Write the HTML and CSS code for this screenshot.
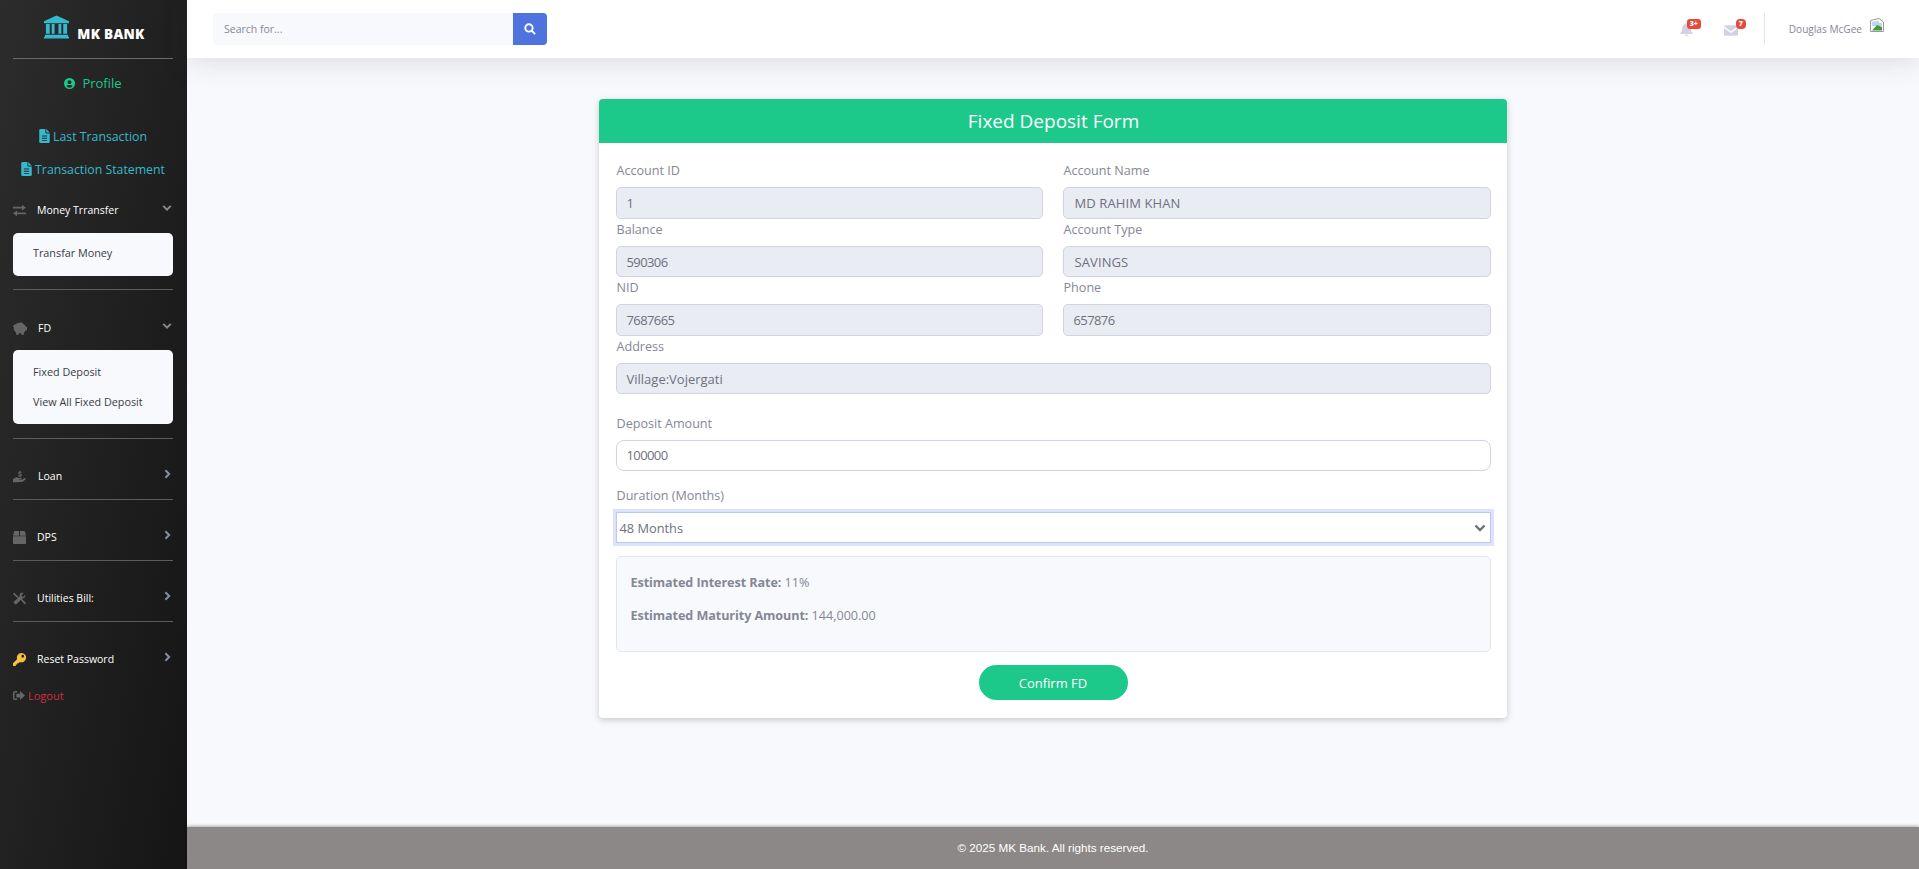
FILE: index.html
```html
<!DOCTYPE html>
<html lang="en">
<head>
<meta charset="utf-8">
<title>Fixed Deposit Form</title>
<link rel="stylesheet" href="styles.css">
</head>
<body>
<div class="app">
  <aside class="sidebar">
    <a class="brand">
      <svg class="brand-icon" viewBox="0 0 28 24"><path d="M14 0 L27 6 V8 H1 V6 Z M3 9 H7 V19 H3 Z M9 9 H12 V19 H9 Z M16 9 H19 V19 H16 Z M21 9 H25 V19 H21 Z M2 20 H26 V22 H27 V24 H1 V22 H2 Z"/></svg>
      <span>MK BANK</span>
    </a>
    <hr class="rule rule-brand">
    <a class="link-profile">
      <svg class="ico-s" viewBox="0 0 16 16"><path fill-rule="evenodd" d="M8 0a8 8 0 1 1 0 16A8 8 0 0 1 8 0zm0 3.200a2.800 2.800 0 1 0 0 5.600 2.800 2.800 0 0 0 0-5.600zM8 14a6 6 0 0 0 4.600-2.200C11.900 10.600 10.500 10 8 10s-3.900.6-4.600 1.800A6 6 0 0 0 8 14z"/></svg>
      <span>Profile</span>
    </a>
    <a class="link-doc link-doc-first">
      <svg class="ico-doc" viewBox="0 0 12 16"><path fill-rule="evenodd" d="M0 1.500A1.500 1.500 0 0 1 1.500 0H7v4a1 1 0 0 0 1 1h4v9.500a1.500 1.500 0 0 1-1.500 1.500h-9A1.500 1.500 0 0 1 0 14.500zM3 7.500v1h6v-1zm0 2.500v1h6v-1zm0 2.500v1h6v-1zM8 0l4 4H8z"/></svg>
      <span>Last Transaction</span>
    </a>
    <a class="link-doc link-doc-second">
      <svg class="ico-doc" viewBox="0 0 12 16"><path fill-rule="evenodd" d="M0 1.500A1.500 1.500 0 0 1 1.500 0H7v4a1 1 0 0 0 1 1h4v9.500a1.500 1.500 0 0 1-1.500 1.500h-9A1.500 1.500 0 0 1 0 14.500zM3 7.500v1h6v-1zm0 2.500v1h6v-1zm0 2.500v1h6v-1zM8 0l4 4H8z"/></svg>
      <span>Transaction Statement</span>
    </a>

    <div class="nav-row nav-transfer">
      <svg class="nav-ico" viewBox="0 0 16 14"><path d="M11 0l5 3.500L11 7V4.500H0v-2h11zM5 7v2.500h11v2H5V14L0 10.500z"/></svg>
      <span class="nav-label">Money Trransfer</span>
      <svg class="chev" viewBox="0 0 12 8"><path d="M1.500 1.500L6 6l4.500-4.500" /></svg>
    </div>
    <div class="sub-card sub-one"><a>Transfar Money</a></div>
    <hr class="rule rule-a">

    <div class="nav-row nav-fd">
      <svg class="nav-ico nav-ico-pig" viewBox="0 0 16 14"><path d="M4 1.500C5 .5 6.500 0 8 .5 9 0 10.500 0 11.500 1.500 13 2 14.200 3.500 14.500 5H16v4h-1.500c-.5 1.500-1.500 2-2 2.500V14h-3v-1.500h-3V14h-3v-2.500C1.500 10 .5 8 1 5.500L0 4.500 1 3c1-.8 2-1.300 3-1.500z"/></svg>
      <span class="nav-label nav-label-fd">FD</span>
      <svg class="chev" viewBox="0 0 12 8"><path d="M1.500 1.500L6 6l4.500-4.500" /></svg>
    </div>
    <div class="sub-card sub-two"><a>Fixed Deposit</a><a>View All Fixed Deposit</a></div>
    <hr class="rule rule-b">

    <div class="nav-row nav-plain">
      <svg class="nav-ico" viewBox="0 0 16 14"><path d="M8 0h1.500v1c1 .2 1.500.7 1.500 1.500H9.500C9.300 2.200 8.800 2.200 8.300 2.300c-.6.300-.3.800.3 1 1.300.3 2.500.7 2.400 2C11 6.300 10.400 7 9.500 7.100V8H8v-.9c-1-.2-1.700-.8-1.700-1.700h1.500c.2.400.8.500 1.200.4.600-.2.500-.7-.1-.9C7.700 4.500 6.500 4.100 6.500 3 6.500 2 7.100 1.300 8 1.100zM0 10l3-1.500c1.500-.7 3-.5 4 .2h3c1 0 1 1.800 0 1.800H7.500v.5H11l3-2c1.200-.6 2.300.7 1.300 1.700L12 13.500 4 14H0z"/></svg>
      <span class="nav-label nav-label-short">Loan</span>
      <svg class="chev-r" viewBox="0 0 8 12"><path d="M1.500 1.500L6 6l-4.500 4.500"/></svg>
    </div>
    <hr class="rule rule-c">

    <div class="nav-row nav-plain">
      <svg class="nav-ico" viewBox="0 0 14 14"><path d="M2 0h4.500v5H0l1-4c.3-.7.5-1 1-1zM7.500 0H12c.5 0 .7.300 1 1l1 4H7.500zM0 5.700h14V13a1 1 0 0 1-1 1H1a1 1 0 0 1-1-1z"/></svg>
      <span class="nav-label">DPS</span>
      <svg class="chev-r" viewBox="0 0 8 12"><path d="M1.500 1.500L6 6l-4.500 4.500"/></svg>
    </div>
    <hr class="rule rule-c">

    <div class="nav-row nav-plain">
      <svg class="nav-ico" viewBox="0 0 16 14"><path d="M1.500 0L7 5 5.500 6.500 0 1.500zM10.500 0c1 0 2 .2 2.500.6L10.500 3l.5 1.500 1.500.5L15 2.500c.5 2-.5 4.500-3.500 4.500L4 14H2.500L1 12.500V11L8 4.500C8 2 9 .2 10.500 0zM9.500 8.500L11 7.500l4.500 4.500c.5 1 0 2-1.500 2z"/></svg>
      <span class="nav-label">Utilities Bill:</span>
      <svg class="chev-r" viewBox="0 0 8 12"><path d="M1.500 1.500L6 6l-4.500 4.500"/></svg>
    </div>
    <hr class="rule rule-c">

    <div class="nav-row nav-plain">
      <svg class="nav-ico nav-ico-key" viewBox="0 0 14 14"><path fill-rule="evenodd" d="M9 0a5 5 0 1 1-1.600 9.700L6 11H4.500v1.500H3V14H0v-3l4.400-4.400A5 5 0 0 1 9 0zm1.500 2a1.500 1.500 0 1 0 0 3 1.500 1.500 0 0 0 0-3z"/></svg>
      <span class="nav-label">Reset Password</span>
      <svg class="chev-r" viewBox="0 0 8 12"><path d="M1.500 1.500L6 6l-4.500 4.500"/></svg>
    </div>

    <a class="logout">
      <svg class="logout-ico" viewBox="0 0 16 14"><path d="M5.500 1H2.500A2.500 2.500 0 0 0 0 3.500v7A2.500 2.500 0 0 0 2.500 13h3v-2h-3a.5.5 0 0 1-.5-.5v-7a.5.5 0 0 1 .5-.5h3zM9.500 1L16 7l-6.500 6V9.500h-5v-5h5z"/></svg>
      <span>Logout</span>
    </a>
  </aside>

  <div class="content">
    <header class="topbar">
      <form class="search">
        <div class="search-input">Search for...</div>
        <div class="search-btn">
          <svg viewBox="0 0 14 14"><circle cx="5.800" cy="5.800" r="4.300"/><path d="M9 9l4 4"/></svg>
        </div>
      </form>
      <div class="top-right">
        <div class="alert">
          <svg class="alert-ico" viewBox="0 0 16 18"><path d="M8 0c.8 0 1.200.6 1.200 1.300C12 2 13.500 4 13.500 7c0 3.500 1 4.500 2.500 6v1H0v-1c1.500-1.500 2.500-2.500 2.500-6 0-3 1.500-5 4.300-5.700C6.800.6 7.200 0 8 0zM6 15h4a2 2 0 0 1-4 0z"/></svg>
          <span class="badge badge-wide">3+</span>
        </div>
        <div class="alert alert-mail">
          <svg class="alert-ico alert-ico-mail" viewBox="0 0 16 12"><path d="M1.500 0h13c.7 0 1.300.5 1.500 1L8 6.800 0 1C.2.500.8 0 1.500 0zM0 3l8 5.800L16 3v7.500c0 .8-.7 1.500-1.500 1.500h-13C.7 12 0 11.300 0 10.500z"/></svg>
          <span class="badge">7</span>
        </div>
        <div class="top-div"></div>
        <span class="user">Douglas McGee</span>
        <svg class="broken" viewBox="0 0 14 14">
          <path class="b-page" d="M.5 2.500L9 .5 13.500 4v9.500H.5z"/>
          <path class="b-sky" d="M2 4l7-1.500V5h3v3H2z"/>
          <path class="b-grass" d="M2 12.500L7 7l5 2v3.500z"/>
        </svg>
      </div>
    </header>

    <main class="main">
      <section class="card">
        <h1 class="card-head">Fixed Deposit Form</h1>
        <div class="card-body">
          <div class="grid">
            <div class="field"><label>Account ID</label><div class="ro num">1</div></div>
            <div class="field"><label>Account Name</label><div class="ro caps">MD RAHIM KHAN</div></div>
            <div class="field"><label>Balance</label><div class="ro num">590306</div></div>
            <div class="field"><label>Account Type</label><div class="ro caps">SAVINGS</div></div>
            <div class="field"><label>NID</label><div class="ro num">7687665</div></div>
            <div class="field"><label>Phone</label><div class="ro num">657876</div></div>
            <div class="field field-wide"><label>Address</label><div class="ro">Village:Vojergati</div></div>
          </div>
          <div class="block block-amount">
            <label>Deposit Amount</label>
            <div class="amount num">100000</div>
          </div>
          <div class="block block-duration">
            <label>Duration (Months)</label>
            <div class="select">
              <span>48 Months</span>
              <svg viewBox="0 0 12 8"><path d="M1.500 1.500L6 6l4.500-4.500"/></svg>
            </div>
          </div>
          <div class="estimate">
            <p><strong>Estimated Interest Rate:</strong> 11%</p>
            <p><strong>Estimated Maturity Amount:</strong> 144,000.00</p>
          </div>
          <div class="actions"><button class="confirm" type="button">Confirm FD</button></div>
        </div>
      </section>
    </main>

    <footer class="footer">© 2025 MK Bank. All rights reserved.</footer>
  </div>
</div>
</body>
</html>
```

FILE: styles.css
```css
* { box-sizing: border-box; }
html, body { margin: 0; height: 100%; }
body {
  font-family: "Open Sans", "Noto Sans", sans-serif;
  background: #f8f9fc;
  color: #858796;
  overflow: hidden;
}
.app { display: flex; height: 869px; }

/* Sidebar */
.sidebar {
  width: 187px;
  flex: none;
  height: 100%;
  padding: 0 14px 0 13px;
  background: linear-gradient(100deg, #2c2c2c 0%, #1e1e1e 60%, #151515 100%);
  display: flex;
  flex-direction: column;
}
.brand {
  height: 58px;
  display: flex;
  align-items: center;
  justify-content: center;
  gap: 7px;
  padding-left: 2px;
  color: #fff;
  font-weight: 800;
  font-size: 13.500px;
  letter-spacing: .3px;
}
.brand-icon { width: 27px; height: 24px; fill: #36b9cc; margin-top: -5px; }
.brand span { margin-top: 9px; }
.rule { width: 100%; height: 1px; border: 0; margin: 0; background: #5c5c5c; flex: none; }
.rule-brand { background: #6b6b6b; }
.link-profile {
  display: flex; justify-content: center; align-items: center; gap: 7px;
  margin-top: 14px; height: 20px;
  color: #1cc88a; font-size: 13px;
}
.ico-s { width: 11px; height: 11px; fill: #1cc88a; }
.link-doc {
  display: flex; justify-content: center; align-items: center; gap: 3px;
  height: 20px; color: #36b9cc; font-size: 12.300px;
}
.link-doc-first { margin-top: 33px; }
.link-doc-second { margin-top: 13px; }
.ico-doc { width: 11px; height: 14px; fill: #36b9cc; }

.nav-row { display: flex; align-items: center; height: 20px; flex: none; }
.nav-transfer { margin-top: 21px; }
.nav-fd { margin-top: 28px; }
.nav-plain { margin-top: 27px; }
.nav-plain .nav-label { margin-top: -1px; }
.nav-ico { width: 13px; height: 13px; fill: #666; flex: none; }
.nav-ico-key { fill: #f6c23e; }
.nav-ico-pig { width: 14px; height: 13px; }
.nav-label {
  margin-left: 11px; color: #fff; font-size: 10.500px; flex: 1;
  font-weight: 400;
}
.nav-label-short { margin-left: 12px; }
.nav-label-fd { margin-left: 11px; }
.chev, .chev-r { flex: none; fill: none; stroke: #8a8a8a; stroke-width: 2.400; margin-top: -4px; }
.chev { width: 10px; height: 8px; margin-right: 1px; }
.chev-r { width: 7px; height: 10px; margin-right: 2px; stroke: #858fa3; }
.sub-card {
  background: #f8f9fc;
  border-radius: 5px;
  display: flex; flex-direction: column;
  padding-left: 20px;
  flex: none;
}
.sub-card a { color: #3a3b45; font-size: 10.800px; height: 29.500px; line-height: 29.500px; }
.sub-one { height: 43px; margin-top: 13px; padding-top: 5px; }
.sub-two { height: 74px; margin-top: 12px; padding-top: 7px; }
.rule-a { margin-top: 13px; }
.rule-b { margin-top: 14px; }
.rule-c { margin-top: 13px; }
.logout {
  display: flex; align-items: center; gap: 3px;
  margin-top: 16px; height: 20px;
  color: #d02c42; font-size: 11px;
}
.logout-ico { width: 12px; height: 11px; fill: #666; }

/* Main column */
.content { flex: 1; min-width: 0; display: flex; flex-direction: column; }
.topbar {
  height: 58px; flex: none;
  background: #fff;
  box-shadow: 0 4px 28px rgba(58, 59, 69, .15);
  display: flex; align-items: center; justify-content: space-between;
  padding: 0 35px 0 26px;
  position: relative;
  z-index: 1;
}
.search { display: flex; width: 334px; height: 32px; }
.search-input {
  flex: 1; background: #f8f9fc; border-radius: 4px 0 0 4px;
  font-size: 10.500px; line-height: 32px; padding-left: 11px; color: #858796;
}
.search-btn {
  width: 34px; background: #4e73df; border-radius: 0 4px 4px 0;
  display: flex; align-items: center; justify-content: center;
}
.search-btn svg { width: 12px; height: 12px; fill: none; stroke: #fff; stroke-width: 2.200; }
.top-right { display: flex; align-items: center; height: 32px; }
.alert { position: relative; width: 14px; height: 14px; margin-right: 30px; }
.alert-ico { display: block; width: 13px; height: 14px; fill: #d1d3e2; margin-top: 1px; }
.alert-ico-mail { width: 14px; height: 11px; margin-top: 3px; }
.badge {
  position: absolute; top: -3px; left: 6px;
  background: #e74a3b; color: #fff; font-size: 7px; font-weight: 800;
  height: 10px; line-height: 10px; padding: 0 3px; border-radius: 3px; white-space: nowrap;
}
.badge-wide { left: 7px; width: 14px; padding: 0; text-align: center; }
.alert-mail .badge { left: 12px; width: 10px; padding: 0; text-align: center; border-radius: 4px; }
.alert-mail { margin-right: 26px; }
.top-div { width: 1px; height: 32px; background: #e3e6f0; margin-right: 24px; }
.user { font-size: 10.100px; color: #858796; margin-right: 8px; }
.broken { width: 14px; height: 14px; margin-top: -8px; }
.b-page { fill: #fff; stroke: #9a9a9a; stroke-width: 1; }
.b-sky { fill: #bcd6ee; }
.b-grass { fill: #3f9b3f; }

.main { flex: 1; padding-top: 41px; display: flex; justify-content: center; align-items: flex-start; }
.card {
  width: 908px; margin-left: -1px;
  height: 619px;
  background: #fff;
  border-radius: 4px;
  box-shadow: 0 2px 6px rgba(58, 59, 69, .25);
  overflow: hidden;
}
.card-head {
  margin: 0; height: 44px;
  background: #1cc88a; color: #fff;
  font-size: 19px; font-weight: 400;
  line-height: 44px; text-align: center;
  padding-left: 2px;
}
.card-body { padding: 17px 16px 0 17px; }
label { display: block; font-size: 12.600px; line-height: 22px; color: #858796; padding-left: 1px; }
.grid { display: grid; grid-template-columns: 427px 428px; column-gap: 20px; row-gap: 0; }
.field-wide { grid-column: 1 / -1; }
.field label { height: 27px; }
.ro {
  height: 31.500px; background: #eaecf4;
  border: 1px solid #d1d3e2; border-radius: 5px;
  font-size: 13px; line-height: 30px; padding-left: 10px; color: #6e707e;
}
.num { letter-spacing: -.6px; }
.caps { letter-spacing: .1px; padding-left: 11px; }
.block-amount { margin-top: 19px; }
.block label { height: 27px; }
.amount {
  height: 31px; border: 1px solid #d1d3e2; border-radius: 8px;
  font-size: 13px; line-height: 29px; padding-left: 10px; color: #6e707e; background: #fff;
}
.block-duration { margin-top: 14px; }
.select {
  height: 31px; background: #fff;
  border: 1px solid #bac8f3; outline: 3px solid #dde4f9;
  font-size: 12.800px; color: #6e707e; padding: 0 4px 0 3px;
  display: flex; align-items: center; justify-content: space-between;
}
.select svg { width: 12px; height: 8px; fill: none; stroke: #6e707e; stroke-width: 2.400; }
.estimate {
  margin-top: 13px; height: 96px;
  background: #f8f9fc; border: 1px solid #e3e6f0; border-radius: 5px;
  padding: 16px 14px 0;
  font-size: 12.600px;
}
.estimate p { margin: 0 0 13px; line-height: 20px; }
.estimate strong { letter-spacing: -.08px; }
.actions { display: flex; justify-content: center; margin-top: 13px; }
.confirm {
  width: 149px; height: 35px; border: 0; border-radius: 18px;
  background: #1cc88a; color: #fff; font: inherit; font-size: 13px;
}

.footer {
  height: 42px; flex: none;
  background: #8c8887; color: #fff;
  box-shadow: 0 -1px 3px rgba(0, 0, 0, .3);
  font-family: "Liberation Sans", Arial, sans-serif;
  font-size: 11.700px; line-height: 42px; text-align: center;
}
```
